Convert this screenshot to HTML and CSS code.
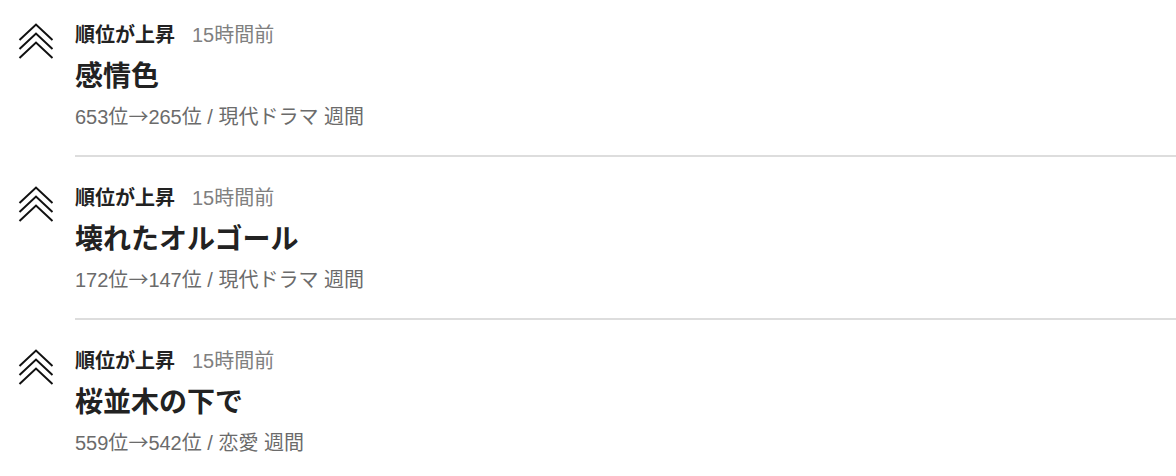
FILE: index.html
```html
<!DOCTYPE html>
<html lang="ja">
<head>
    <meta charset="UTF-8">
    <meta name="viewport" content="width=device-width, initial-scale=1.0">
    <title>ランキング通知</title>
    <link rel="stylesheet" href="styles.css">
</head>
<body>
  <ul class="feed">
    <li class="feed-item">
      <div class="feed-icon">
        <svg width="36" height="38" viewBox="0 0 36 38" aria-hidden="true">
          <polyline points="1.5,17 18,1.5 34.5,17" />
          <polyline points="1.5,26 18,10.5 34.5,26" />
          <polyline points="1.5,35 18,19.5 34.5,35" />
        </svg>
      </div>
      <div class="feed-body">
        <div class="feed-head">
          <span class="feed-label">順位が上昇</span>
          <span class="feed-time">15時間前</span>
        </div>
        <div class="feed-title">感情色</div>
        <div class="feed-meta">653位<span class="arrow">→</span>265位 / 現代ドラマ 週間</div>
      </div>
    </li>
    <li class="feed-item">
      <div class="feed-icon">
        <svg width="36" height="38" viewBox="0 0 36 38" aria-hidden="true">
          <polyline points="1.5,17 18,1.5 34.5,17" />
          <polyline points="1.5,26 18,10.5 34.5,26" />
          <polyline points="1.5,35 18,19.5 34.5,35" />
        </svg>
      </div>
      <div class="feed-body">
        <div class="feed-head">
          <span class="feed-label">順位が上昇</span>
          <span class="feed-time">15時間前</span>
        </div>
        <div class="feed-title">壊れたオルゴール</div>
        <div class="feed-meta">172位<span class="arrow">→</span>147位 / 現代ドラマ 週間</div>
      </div>
    </li>
    <li class="feed-item">
      <div class="feed-icon">
        <svg width="36" height="38" viewBox="0 0 36 38" aria-hidden="true">
          <polyline points="1.5,17 18,1.5 34.5,17" />
          <polyline points="1.5,26 18,10.5 34.5,26" />
          <polyline points="1.5,35 18,19.5 34.5,35" />
        </svg>
      </div>
      <div class="feed-body">
        <div class="feed-head">
          <span class="feed-label">順位が上昇</span>
          <span class="feed-time">15時間前</span>
        </div>
        <div class="feed-title">桜並木の下で</div>
        <div class="feed-meta">559位<span class="arrow">→</span>542位 / 恋愛 週間</div>
      </div>
    </li>
  </ul>
</body>
</html>
```

FILE: styles.css
```css
html, body {
    margin: 0;
    padding: 0;
    background-color: #ffffff;
    font-family: "Liberation Sans", "Noto Sans CJK JP", sans-serif;
    color: #222222;
}

/* Ranking feed */
.feed {
    list-style: none;
    margin: -6px 0 0 0;
    padding: 0;
}

.feed-item {
    display: flex;
    align-items: flex-start;
}

.feed-icon {
    flex: 0 0 36px;
    padding: 29px 21px 0 18px;
}

.feed-icon svg {
    display: block;
}

.feed-icon polyline {
    fill: none;
    stroke: #111111;
    stroke-width: 2;
}

.feed-body {
    flex: 1;
    padding: 27px 0 24px 0;
    border-bottom: 2px solid #dddddd;
}

.feed-item:last-child .feed-body {
    border-bottom: none;
}

.feed-head {
    display: flex;
    align-items: center;
    gap: 17px;
    height: 28px;
    font-size: 20px;
    line-height: 28px;
}

.feed-label {
    font-weight: bold;
    color: #222222;
}

.feed-time {
    color: #808080;
}

.feed-title {
    margin-top: 10px;
    font-size: 28px;
    line-height: 36px;
    font-weight: bold;
    color: #222222;
}

.feed-meta {
    margin-top: 8px;
    height: 28px;
    font-size: 20px;
    line-height: 28px;
    color: #6b6b6b;
}

.arrow {
    font-family: "Noto Sans CJK JP", sans-serif;
    line-height: 1;
}
```
